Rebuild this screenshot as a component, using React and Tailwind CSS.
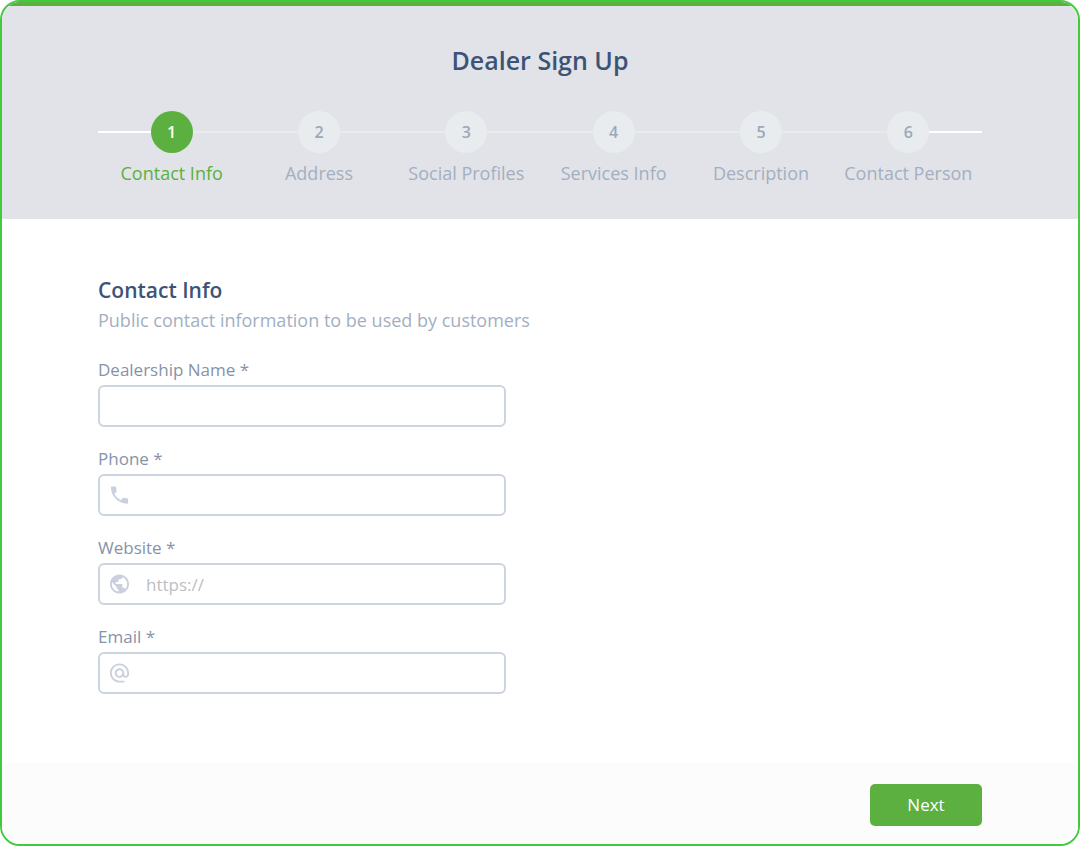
import { MdPhone, MdPublic, MdAlternateEmail } from "react-icons/md";

const steps = [
  "Contact Info",
  "Address",
  "Social Profiles",
  "Services Info",
  "Description",
  "Contact Person",
];

const fields = [
  { id: "dealership", label: "Dealership Name *", type: "text" },
  { id: "phone", label: "Phone *", type: "tel", Icon: MdPhone },
  { id: "website", label: "Website *", type: "url", Icon: MdPublic, placeholder: "https://" },
  { id: "email", label: "Email *", type: "email", Icon: MdAlternateEmail },
];

function Step({ index, label }) {
  const active = index === 0;
  const first = index === 0;
  const last = index === steps.length - 1;
  return (
    <li
      className="flex min-w-0 flex-1 flex-col items-center"
      aria-current={active ? "step" : undefined}
    >
      <div className="flex w-full items-center">
        <span className={`h-0.5 flex-1 ${first ? "bg-white" : "bg-[#e8eaec]"}`} />
        <span
          className={`flex size-[42px] items-center justify-center rounded-full text-base font-semibold ${
            active ? "bg-[#5bb03f] text-white" : "bg-[#e8ecef] text-[#9aa8bb]"
          }`}
        >
          {index + 1}
        </span>
        <span className={`h-0.5 flex-1 ${last ? "bg-white" : "bg-[#e8eaec]"}`} />
      </div>
      <span
        className={`mt-2 text-lg leading-6 whitespace-nowrap ${
          active ? "text-[#5bb03f]" : "text-[#a3afc1]"
        }`}
      >
        {label}
      </span>
    </li>
  );
}

function Field({ id, label, type, Icon, placeholder }) {
  return (
    <div>
      <label htmlFor={id} className="block text-[17px] leading-6 text-[#8593a9]">
        {label}
      </label>
      <div className="relative mt-[3px]">
        {Icon && (
          <Icon
            aria-hidden="true"
            className="pointer-events-none absolute top-0 left-[10px] h-full w-[23px] text-[#cbd0de]"
          />
        )}
        <input
          id={id}
          type={type}
          placeholder={placeholder}
          className={`block h-[42px] w-full rounded-md border-2 border-[#cbd4df] bg-white pr-3 text-[17px] text-[#3d5375] outline-none placeholder:text-[#bcbec3] ${
            Icon ? "pl-[46px]" : "pl-3"
          }`}
        />
      </div>
    </div>
  );
}

export default function App() {
  return (
    <form
      className="flex min-h-screen flex-col overflow-hidden rounded-[20px] border-2 border-[#41cb3c] bg-white font-['Open_Sans',sans-serif]"
      onSubmit={(e) => e.preventDefault()}
    >
      <header className="border-t-4 border-[#5bb03f] bg-[#e1e3e8] px-24 pt-9 pb-[34px]">
        <h1 className="text-center text-[25px] leading-9 font-semibold text-[#3d5375]">
          Dealer Sign Up
        </h1>
        <ol className="mt-[33px] flex">
          {steps.map((label, i) => (
            <Step key={label} index={i} label={label} />
          ))}
        </ol>
      </header>

      <main className="flex-1 px-24 pt-[55px] pb-16">
        <h2 className="text-[21px] leading-8 font-semibold text-[#3d5375]">Contact Info</h2>
        <p className="text-lg leading-7 text-[#a3afc1]">
          Public contact information to be used by customers
        </p>
        <div className="mt-6 flex max-w-[408px] flex-col gap-5">
          {fields.map((field) => (
            <Field key={field.id} {...field} />
          ))}
        </div>
      </main>

      <footer className="flex justify-end bg-[#fcfcfc] px-24 pt-[21px] pb-[18px]">
        <button
          type="submit"
          className="h-[42px] w-28 rounded-[5px] bg-[#5bb03f] text-[17px] text-white"
        >
          Next
        </button>
      </footer>
    </form>
  );
}
